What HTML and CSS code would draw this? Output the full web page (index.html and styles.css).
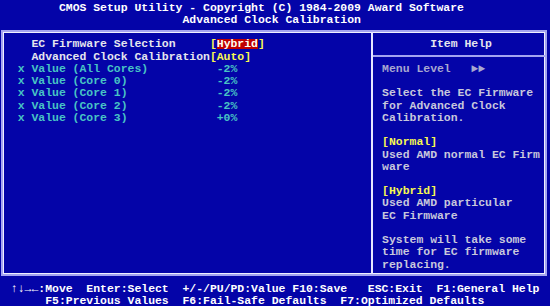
FILE: index.html
```html
<!DOCTYPE html>
<html lang="en">
<head>
  <meta charset="UTF-8">
  <meta name="viewport" content="width=device-width, initial-scale=1.0">
  <title>Advanced Clock Calibration</title>
  <link rel="stylesheet" href="styles.css">
</head>
<body>
  <div class="screen">
    <header class="title">
      <div class="title-main">CMOS Setup Utility - Copyright (C) 1984-2009 Award Software</div>
      <div class="title-sub">Advanced Clock Calibration</div>
    </header>

    <div class="frame">
      <div class="items">
        <div class="item">
          <span class="mark"></span>
          <span class="label">EC Firmware Selection</span>
          <span class="value">[<span class="sel">Hybrid</span>]</span>
        </div>
        <div class="item">
          <span class="mark"></span>
          <span class="label">Advanced Clock Calibration</span>
          <span class="value">[Auto]</span>
        </div>
        <div class="item locked">
          <span class="mark">x</span>
          <span class="label">Value (All Cores)</span>
          <span class="value num">-2%</span>
        </div>
        <div class="item locked">
          <span class="mark">x</span>
          <span class="label">Value (Core 0)</span>
          <span class="value num">-2%</span>
        </div>
        <div class="item locked">
          <span class="mark">x</span>
          <span class="label">Value (Core 1)</span>
          <span class="value num">-2%</span>
        </div>
        <div class="item locked">
          <span class="mark">x</span>
          <span class="label">Value (Core 2)</span>
          <span class="value num">-2%</span>
        </div>
        <div class="item locked">
          <span class="mark">x</span>
          <span class="label">Value (Core 3)</span>
          <span class="value num">+0%</span>
        </div>
      </div>

      <div class="help">
        <div class="help-title">Item Help</div>
        <div class="help-rule"></div>
        <div class="help-body">
          <div class="line menu-level">Menu Level   ►►</div>
          <div class="line">&nbsp;</div>
          <div class="line">Select the EC Firmware</div>
          <div class="line">for Advanced Clock</div>
          <div class="line">Calibration.</div>
          <div class="line">&nbsp;</div>
          <div class="line opt">[Normal]</div>
          <div class="line">Used AMD normal EC Firm</div>
          <div class="line">ware</div>
          <div class="line">&nbsp;</div>
          <div class="line opt">[Hybrid]</div>
          <div class="line">Used AMD particular</div>
          <div class="line">EC Firmware</div>
          <div class="line">&nbsp;</div>
          <div class="line">System will take some</div>
          <div class="line">time for EC firmware</div>
          <div class="line">replacing.</div>
        </div>
      </div>
    </div>

    <footer class="keys">
      <div class="line"> ↑↓→←:Move  Enter:Select  +/-/PU/PD:Value F10:Save   ESC:Exit  F1:General Help</div>
      <div class="line">      F5:Previous Values  F6:Fail-Safe Defaults  F7:Optimized Defaults</div>
    </footer>
  </div>
</body>
</html>
```

FILE: styles.css
```css
body {
  margin: 0;
  background-color: #0404a8;
  color: #ffffff;
  font-family: "Liberation Mono", "DejaVu Sans Mono", monospace;
  font-size: 11.458px;
  font-weight: bold;
  line-height: 12.24px;
}
.screen {
  width: 550px;
  height: 306px;
  display: grid;
  grid-template-rows: 24.48px 257.04px 24.48px;
  overflow: hidden;
}
.line {
  white-space: pre;
}
.title {
  padding: 1.7px 0 0 4px;
}
.title-main {
  padding-left: 8ch;
}
.title-sub {
  padding-left: 26ch;
}
.frame {
  display: flex;
  margin: 6px 3px 6px 1px;
  border: 2px solid #a4a4f0;
  box-shadow: inset 0 0 0 1px #f0f0ff;
}
.items {
  width: 368px;
  padding: 5.94px 0 0 calc(1px + 2ch);
  box-sizing: border-box;
}
.item {
  display: grid;
  grid-template-columns: 2ch 26ch auto;
  color: #e6e6ee;
}
.label,
.value {
  white-space: pre;
}
.value {
  color: #f8f850;
}
.sel {
  display: inline-block;
  height: 10px;
  line-height: 10.5px;
  background-color: #c00000;
  color: #fffff0;
}
.locked,
.locked .value {
  color: #48c4c4;
}
.num {
  padding-left: 1ch;
}
.help {
  flex: 1;
  padding-top: 5.94px;
  border-left: 2px solid #e6e6ff;
}
.help-title {
  padding-left: calc(9.1px + 7ch);
  color: #e6e6ee;
}
.help-rule {
  height: 2px;
  margin: 4.5px 0 5.74px;
  background-color: #a4a4f0;
}
.help-body {
  padding-left: 9.1px;
  color: #c8c8dc;
}
.menu-level {
  color: #a8a8d0;
}
.opt {
  color: #f8f850;
}
.keys {
  padding: 1.7px 0 0 4px;
}
```
